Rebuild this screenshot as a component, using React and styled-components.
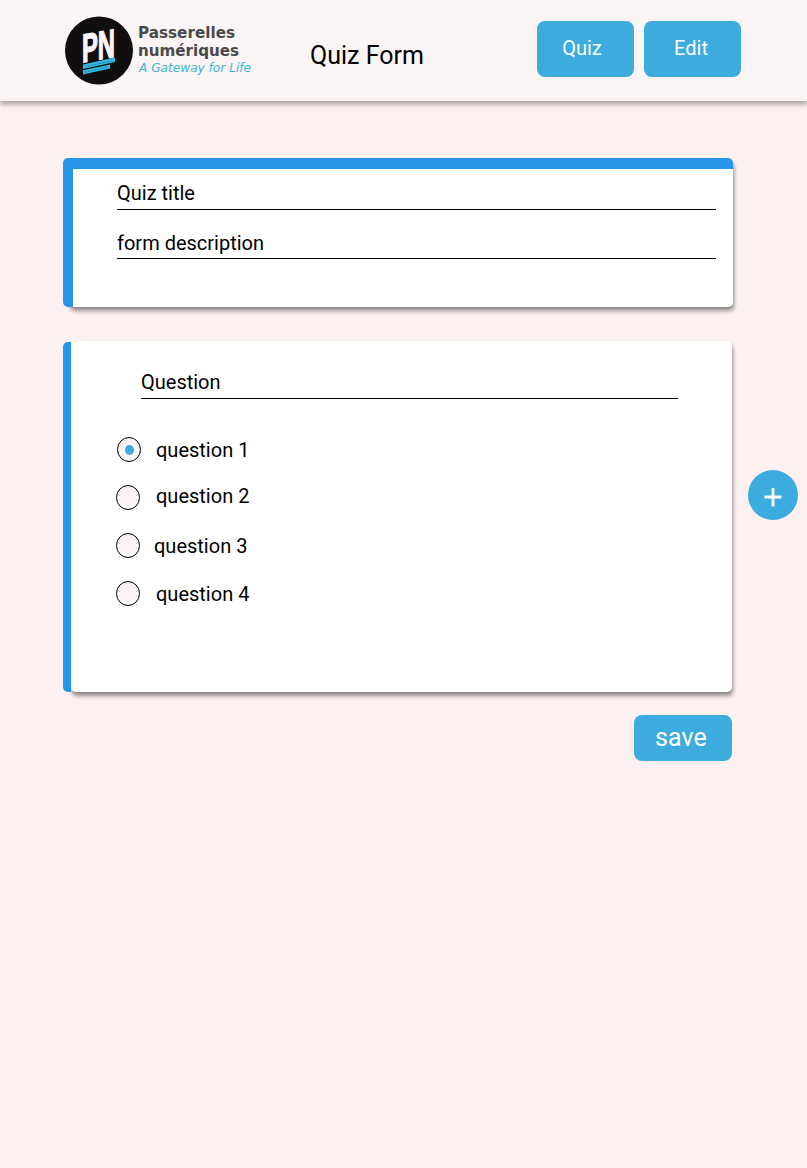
import React, { useState } from "react";
import styled, { createGlobalStyle } from "styled-components";

const GlobalStyle = createGlobalStyle`
  *, *::before, *::after { box-sizing: border-box; }
  body {
    margin: 0;
    background: #fcf0f0;
    color: #000;
    font-family: Roboto, "Liberation Sans", sans-serif;
  }
  button { font-family: inherit; border: 0; padding: 0; cursor: pointer; }
`;

const Page = styled.div`
  min-height: 1168px;
  overflow: hidden;
`;

const Header = styled.header`
  display: flex;
  align-items: flex-start;
  height: 101px;
  padding-left: 64px;
  background: #faf4f4;
  box-shadow: 0 4px 4px rgba(0, 0, 0, 0.25), 0 1px 2px rgba(0, 0, 0, 0.1);
`;

const Brand = styled.div`
  width: 246px;
  padding-top: 15px;
`;

const Heading = styled.h1`
  width: 227px;
  margin: 41px 0 0;
  font-size: 25px;
  line-height: 30px;
  font-weight: 400;
`;

const Nav = styled.nav`
  display: flex;
  gap: 10px;
  margin-top: 21px;
`;

const NavButton = styled.button`
  width: 97px;
  height: 56px;
  padding: 0 ${(p) => p.$inset || "7px"} 2px 0;
  border-radius: 8px;
  background: #3cacdf;
  color: #fff;
  font-size: 20px;
`;

const Main = styled.main`
  display: flex;
  flex-direction: column;
  gap: 34px;
  width: 744px;
  padding: 57px 11px 0 63px;
`;

const Card = styled.section`
  display: flex;
  width: ${(p) => p.$width};
  height: ${(p) => p.$height};
`;

const Accent = styled.div`
  flex: none;
  position: relative;
  z-index: 1;
  width: ${(p) => p.$width};
  margin-top: ${(p) => p.$top || "0"};
  border-radius: 5px 0 0 5px;
  background: #2896e7;
`;

const CardBody = styled.div`
  position: relative;
  flex: 1;
  margin-left: ${(p) => p.$overlap || "0"};
  padding: ${(p) => p.$padding};
  border-radius: 5px;
  background: ${(p) =>
    p.$banner ? "linear-gradient(#2896e7 11px, #fff 11px)" : "#fff"};
  box-shadow: 1px 4px 4px rgba(0, 0, 0, 0.4), 0 1px 2px rgba(0, 0, 0, 0.12);
`;

const Field = styled.div`
  height: ${(p) => p.$height || "50px"};
  border-bottom: 1px solid #000;
  font-size: 20px;
  line-height: 24px;
  padding-top: ${(p) => p.$top || "0"};
`;

const Options = styled.div`
  display: flex;
  flex-direction: column;
  gap: 22px;
  margin: 37px 0 0 -26px;
`;

const Option = styled.button`
  display: flex;
  align-items: center;
  height: 26px;
  padding-left: ${(p) => p.$indent || "0"};
  background: none;
  color: inherit;
  text-align: left;
`;

const OptionText = styled.span`
  font-size: 20px;
  line-height: 24px;
  margin: ${(p) => p.$margin};
`;

const RadioIcon = styled.svg`
  flex: none;
  width: 25px;
  height: 26px;
`;

const SaveButton = styled.button`
  align-self: flex-end;
  width: 98px;
  height: 46px;
  margin: -11px 1px 0 0;
  padding: 0 4px 1px 0;
  border-radius: 8px;
  background: #3cacdf;
  color: #fff;
  font-size: 25px;
  letter-spacing: 0.1px;
`;

const AddButton = styled.button`
  position: absolute;
  left: 748px;
  top: 470px;
  width: 50px;
  height: 50px;
  border-radius: 50%;
  background: #3cacdf;
`;

function Logo() {
  return (
    <svg width="190" height="72" viewBox="64 15 190 72" aria-label="Passerelles numériques">
      <circle cx="99" cy="50.5" r="34" fill="#110e0e" />
      <g transform="translate(82 62.5) skewY(-10) scale(.57 1)">
        <text fill="#faf4f4" stroke="#faf4f4" strokeWidth="1.4" fontFamily="Liberation Sans, sans-serif" fontWeight="700" fontSize="40" textLength="58" lengthAdjust="spacingAndGlyphs">PN</text>
      </g>
      <path d="M83 64.4 115 57.6V62L83 69Z M83 70.3 110 64.4V68.4L83 74.4Z" fill="#35b9e0" />
      <path d="M85 66.7 112 60.8M85 72.2 108 67" fill="none" stroke="#1f84ab" strokeWidth="1" strokeDasharray="2 1" />
      <g fontFamily="DejaVu Sans, sans-serif">
        <g fill="#494949" fontWeight="700" fontSize="15">
          <text x="138" y="37.7" textLength="97" lengthAdjust="spacingAndGlyphs">Passerelles</text>
          <text x="138" y="55.7" textLength="101" lengthAdjust="spacingAndGlyphs">numériques</text>
        </g>
        <text x="139" y="72" fill="#42b5d3" fontStyle="italic" fontSize="11.8" textLength="112" lengthAdjust="spacingAndGlyphs">A Gateway for Life</text>
      </g>
    </svg>
  );
}

function Radio({ checked }) {
  return (
    <RadioIcon viewBox="0 0 25 26">
      <ellipse cx="13" cy="13.5" rx="11.5" ry="12" fill="#faf4f4" stroke="#000" />
      {checked && <ellipse cx="13.5" cy="14" rx="4.5" ry="5" fill="#3cacdf" />}
    </RadioIcon>
  );
}

const options = [
  { label: "question 1", indent: "1px", margin: "1px 0 0 15px" },
  { label: "question 2", margin: "-3px 0 0 16px" },
  { label: "question 3", margin: "1px 0 0 14px" },
  { label: "question 4", margin: "1px 0 0 16px" },
];

export default function App() {
  const [selected, setSelected] = useState(0);
  return (
    <Page>
      <GlobalStyle />
      <Header>
        <Brand><Logo /></Brand>
        <Heading>Quiz Form</Heading>
        <Nav>
          <NavButton>Quiz</NavButton>
          <NavButton $inset="3px">Edit</NavButton>
        </Nav>
      </Header>
      <Main>
        <Card $width="670px" $height="149px">
          <Accent $width="10px" />
          <CardBody $banner $overlap="-4px" $padding="23px 17px 0 48px">
            <Field $height="29px">Quiz title</Field>
            <Field $height="49px" $top="21px">form description</Field>
          </CardBody>
        </Card>
        <Card $width="669px" $height="351px">
          <Accent $width="8px" $top="1px" />
          <CardBody $padding="29px 54px 0 70px">
            <Field $height="29px">Question</Field>
            <Options>
              {options.map((o, i) => (
                <Option key={o.label} $indent={o.indent} onClick={() => setSelected(i)}>
                  <Radio checked={selected === i} />
                  <OptionText $margin={o.margin}>{o.label}</OptionText>
                </Option>
              ))}
            </Options>
          </CardBody>
        </Card>
        <SaveButton>save</SaveButton>
      </Main>
      <AddButton aria-label="Add question">
        <svg width="50" height="50" viewBox="0 0 50 50">
          <path d="M16.5 27H33.5M25 18V36.5" stroke="#fff" strokeWidth="2.8" />
        </svg>
      </AddButton>
    </Page>
  );
}
